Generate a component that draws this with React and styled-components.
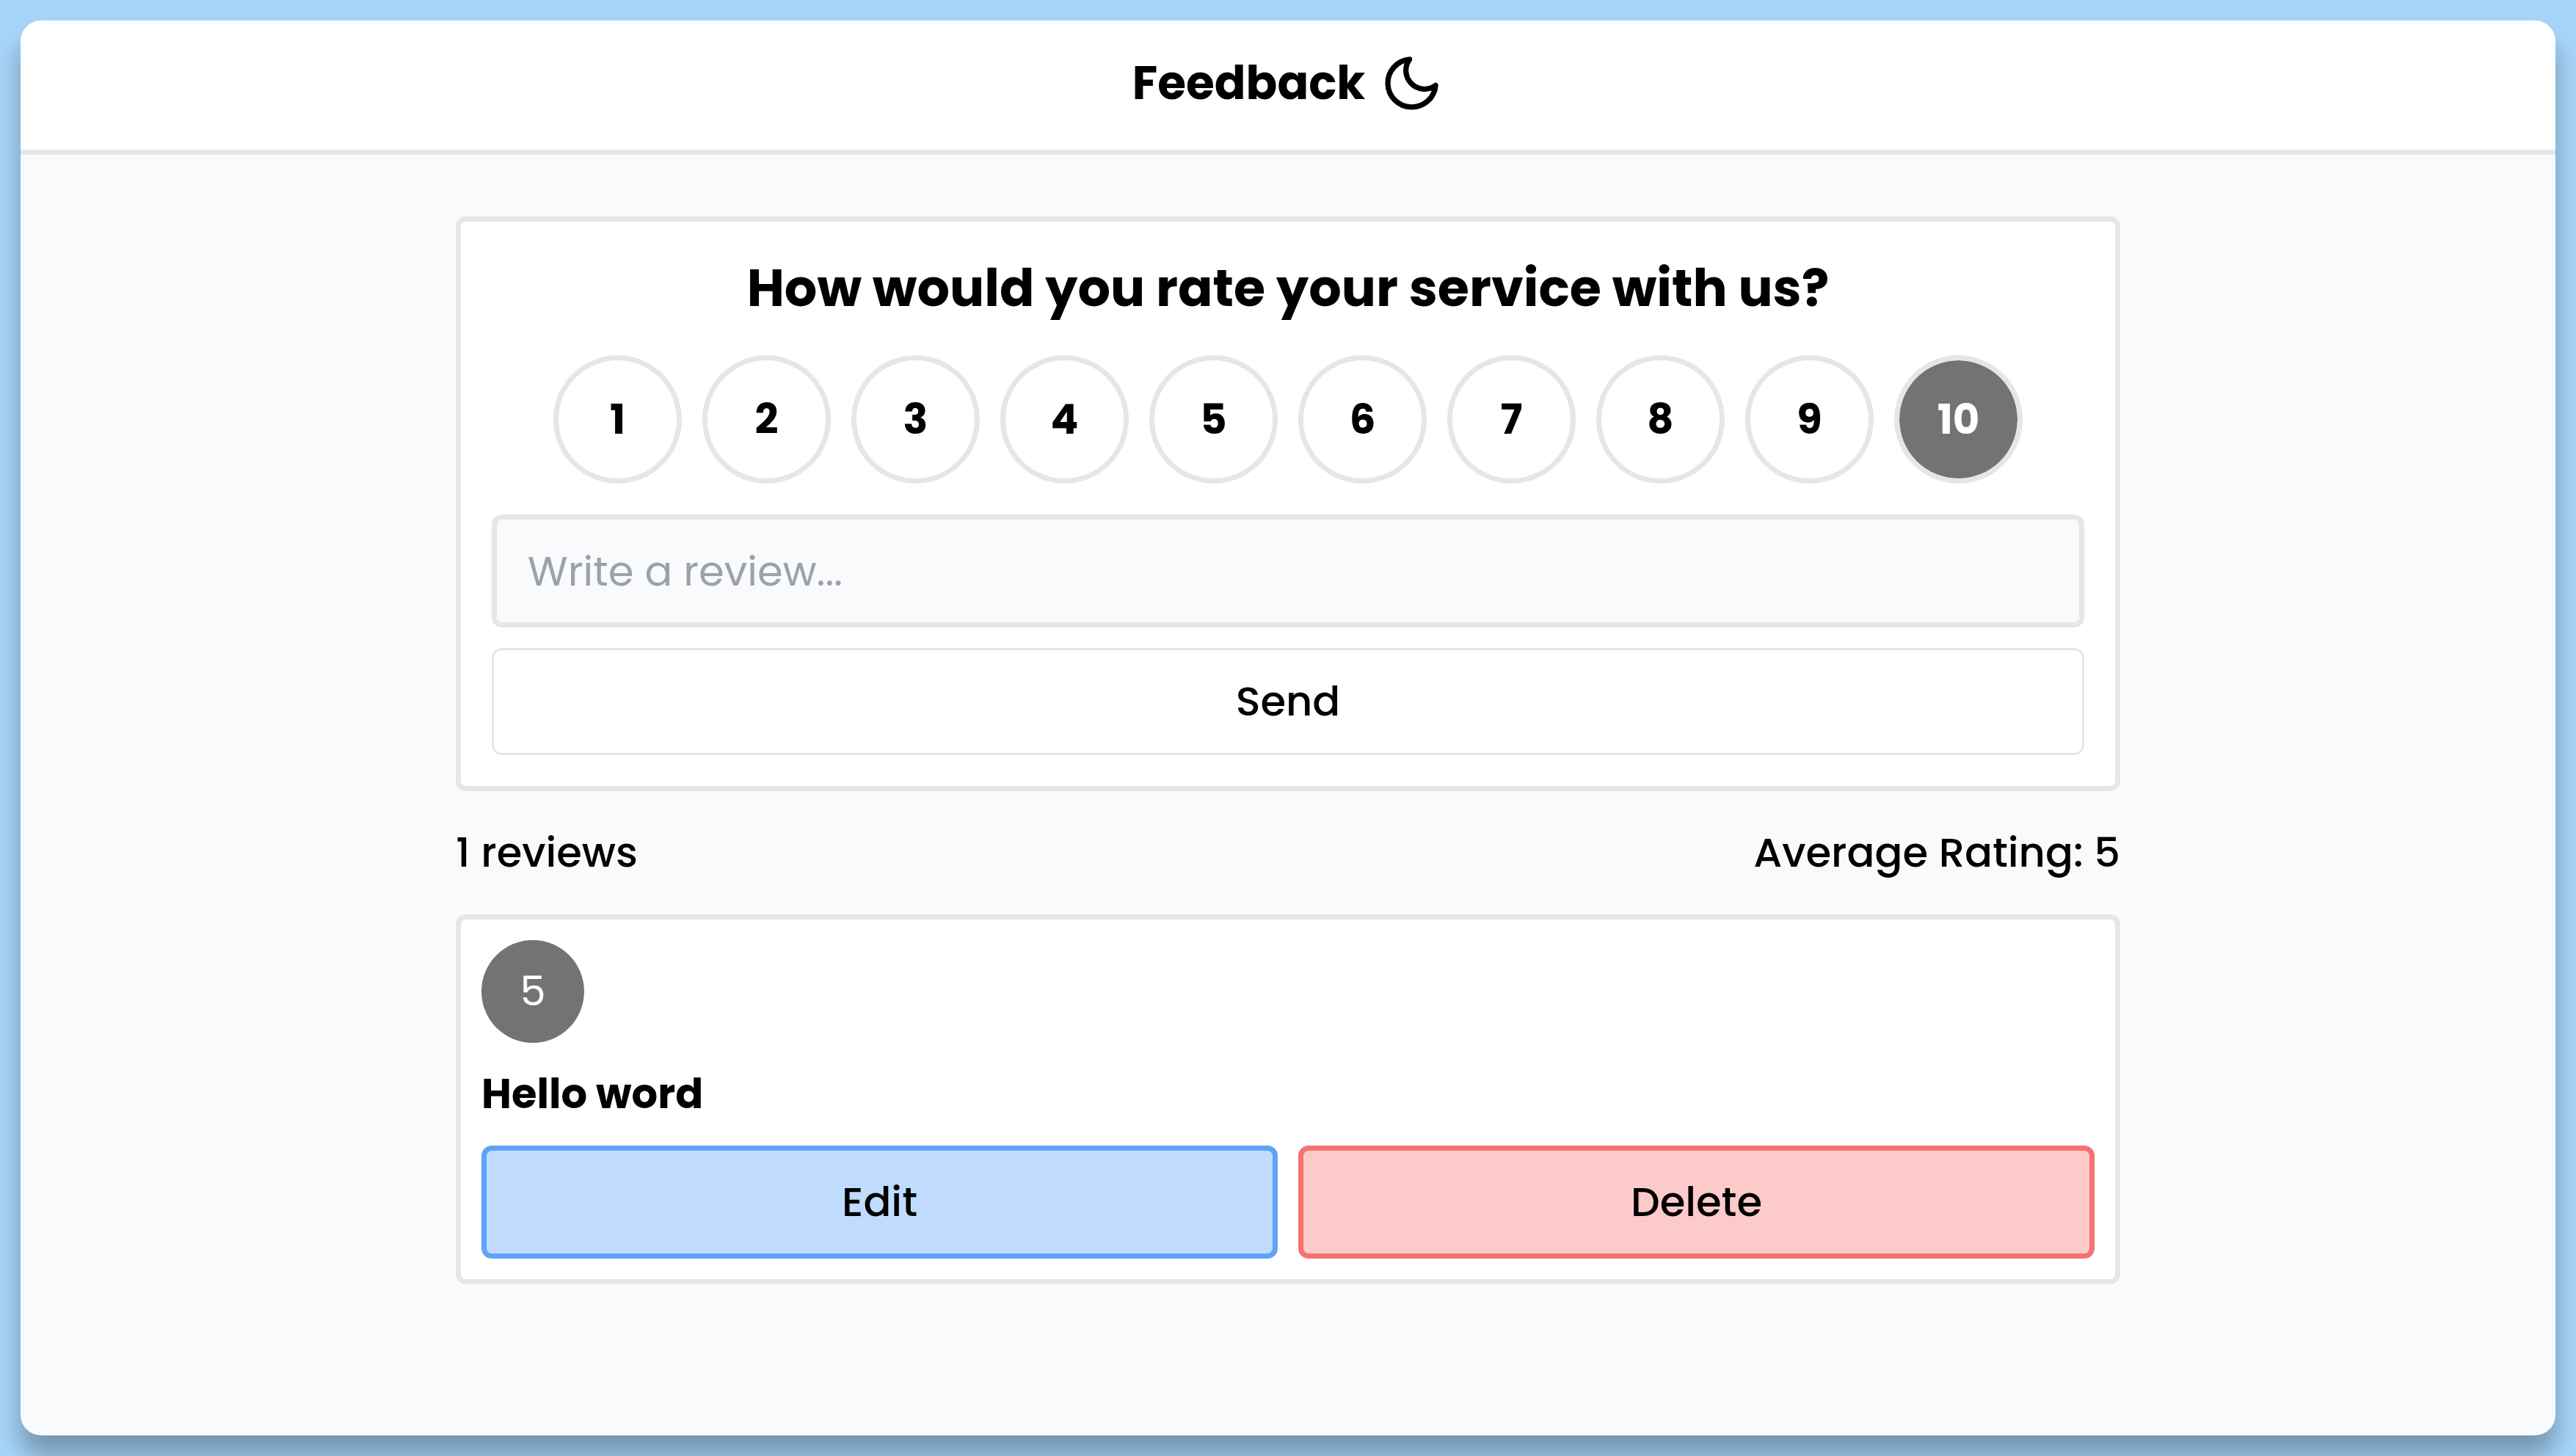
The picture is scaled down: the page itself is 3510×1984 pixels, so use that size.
import React, { useState } from "react";
import styled, { createGlobalStyle } from "styled-components";
import { FiMoon } from "react-icons/fi";

const GlobalStyle = createGlobalStyle`
  *, *::before, *::after { box-sizing: border-box; }
  body {
    margin: 0;
    background: #a7d5f9;
    color: #000;
    font-family: Poppins, Inter, "Liberation Sans", sans-serif;
    font-size: 56px;
    line-height: 84px;
  }
  h1, h2, p { margin: 0; }
  button, input { font: inherit; color: inherit; }
`;

const Page = styled.div`
  display: flex;
  min-height: 100vh;
  padding: 28px;
`;

const Shell = styled.div`
  flex: 1;
  background: #f9fafc;
  border-radius: 28px;
  box-shadow: 0 28px 35px rgba(0, 0, 0, 0.3);
`;

const Header = styled.header`
  display: flex;
  align-items: center;
  justify-content: center;
  gap: 20px;
  padding: 43px 42px 49px;
  background: #fff;
  border-bottom: 7px solid #e5e6e8;
  border-radius: 28px 28px 0 0;
`;

const Title = styled.h1`
  font-size: 63px;
  line-height: 84px;
  font-weight: 700;
`;

const ThemeToggle = styled.button`
  display: flex;
  align-items: center;
  height: 84px;
  padding: 0;
  border: 0;
  background: none;
  cursor: pointer;
`;

const Main = styled.main`
  display: flex;
  flex-direction: column;
  gap: 42px;
  width: 100%;
  max-width: 2268px;
  margin: 0 auto;
  padding: 84px 0;
`;

const Card = styled.section`
  background: #fff;
  border: 7px solid #e5e6e8;
  border-radius: 14px;
`;

const RatingForm = styled(Card).attrs({ as: "form" })`
  display: flex;
  flex-direction: column;
  gap: 28px;
  padding: 42px;
`;

const Question = styled.h2`
  font-size: 70px;
  line-height: 98px;
  font-weight: 700;
  text-align: center;
`;

const Scale = styled.div`
  display: flex;
  justify-content: center;
  gap: 28px;
  padding: 14px 0;
`;

const ScoreLabel = styled.label`
  display: grid;
  place-items: center;
  width: 175px;
  height: 175px;
  border: 7px solid #e6e6ea;
  border-radius: 50%;
  background: ${(p) => (p.$active ? "#737373" : "#fff")};
  background-clip: padding-box;
  color: ${(p) => (p.$active ? "#fff" : "#000")};
  font-weight: 700;
  cursor: pointer;
`;

const ScoreInput = styled.input`
  grid-area: 1 / 1;
  width: 100%;
  height: 100%;
  margin: 0;
  appearance: none;
  border-radius: 50%;
`;

const ScoreText = styled.span`
  grid-area: 1 / 1;
`;

const ReviewInput = styled.input`
  width: 100%;
  height: 154px;
  padding: 0 42px;
  border: 7px solid #e5e6e8;
  border-radius: 14px;
  background: #f9fafc;
  &::placeholder {
    color: #9da1ad;
    opacity: 1;
  }
`;

const Button = styled.button`
  flex: 1;
  height: 154px;
  padding: 0;
  border: 7px solid ${(p) => p.$edge};
  border-radius: 14px;
  background: ${(p) => p.$fill};
  font-weight: 500;
  cursor: pointer;
`;

const SendButton = styled(Button)`
  flex: none;
  height: 146px;
  border-width: 3px;
`;

const Summary = styled.div`
  display: flex;
  justify-content: space-between;
  font-weight: 500;
`;

const ReviewCard = styled(Card).attrs({ as: "article" })`
  display: flex;
  flex-direction: column;
  gap: 28px;
  padding: 28px;
`;

const Badge = styled.div`
  display: grid;
  place-items: center;
  width: 140px;
  height: 140px;
  border-radius: 50%;
  background: #737373;
  color: #fff;
`;

const ReviewText = styled.p`
  font-weight: 700;
`;

const Actions = styled.div`
  display: flex;
  gap: 28px;
`;

const scores = [1, 2, 3, 4, 5, 6, 7, 8, 9, 10];

export default function App() {
  const [score, setScore] = useState(10);

  return (
    <>
      <GlobalStyle />
      <Page>
        <Shell>
          <Header>
            <Title>Feedback</Title>
            <ThemeToggle type="button" aria-label="Toggle dark mode">
              <FiMoon size={87} />
            </ThemeToggle>
          </Header>
          <Main>
            <RatingForm onSubmit={(e) => e.preventDefault()}>
              <Question>How would you rate your service with us?</Question>
              <Scale role="radiogroup" aria-label="Rating">
                {scores.map((n) => (
                  <ScoreLabel key={n} $active={n === score}>
                    <ScoreInput
                      type="radio"
                      name="score"
                      value={n}
                      checked={n === score}
                      onChange={() => setScore(n)}
                    />
                    <ScoreText>{n}</ScoreText>
                  </ScoreLabel>
                ))}
              </Scale>
              <ReviewInput type="text" aria-label="Review" placeholder="Write a review..." />
              <SendButton type="submit" $edge="#e5e6e8" $fill="#fff">
                Send
              </SendButton>
            </RatingForm>
            <Summary>
              <p>1 reviews</p>
              <p>Average Rating: 5</p>
            </Summary>
            <ReviewCard>
              <Badge>5</Badge>
              <ReviewText>Hello word</ReviewText>
              <Actions>
                <Button type="button" $edge="#60a2f8" $fill="#bfdbfe">
                  Edit
                </Button>
                <Button type="button" $edge="#f57172" $fill="#fdcaca">
                  Delete
                </Button>
              </Actions>
            </ReviewCard>
          </Main>
        </Shell>
      </Page>
    </>
  );
}
